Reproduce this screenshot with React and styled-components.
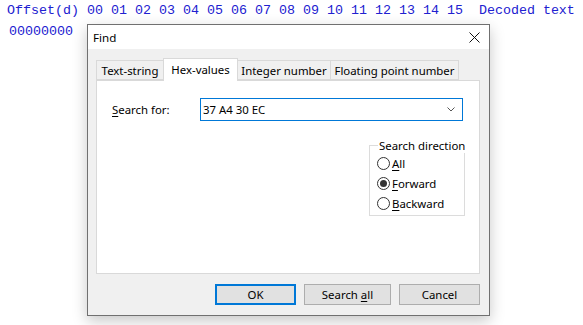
import React from 'react';
import styled, { createGlobalStyle } from 'styled-components';

const GlobalStyle = createGlobalStyle`
  html, body {
    margin: 0;
    background: #ffffff;
  }
  body {
    width: 583px;
    height: 325px;
    overflow: hidden;
    position: relative;
  }
`;

const HexView = styled.div`
  padding: 0 0 0 7px;
  font-family: "Liberation Mono", "Courier New", monospace;
  font-size: 13.33px;
  color: #2020d0;
`;

const HexLine = styled.div`
  height: 21px;
  line-height: 21px;
  white-space: pre;
  padding-left: ${p => p.indent || 0}px;
`;

const Window = styled.div`
  position: absolute;
  left: 87px;
  top: 24px;
  width: 401px;
  height: 290px;
  border: 1px solid #707070;
  background: #f0f0f0;
  box-shadow: 0 5px 14px rgba(0, 0, 0, 0.22);
  display: flex;
  flex-direction: column;
  font-family: "Noto Sans", "Open Sans", sans-serif;
  font-size: 11.4px;
  color: #000;
`;

const TitleBar = styled.div`
  height: 24px;
  background: #ffffff;
  display: flex;
  align-items: center;
  justify-content: space-between;
  padding: 0 9px 0 5px;
`;

const Title = styled.span`
  font-size: 11.6px;
`;

const Body = styled.div`
  flex: 1;
  display: flex;
  flex-direction: column;
  padding: 9px 9px 10px 8px;
`;

const TabStrip = styled.div`
  display: flex;
  align-items: flex-end;
  height: 22px;
  position: relative;
  z-index: 1;
`;

const Tab = styled.div`
  box-sizing: border-box;
  width: ${p => p.w}px;
  height: ${p => (p.active ? 23 : 20)}px;
  margin-bottom: ${p => (p.active ? -1 : 0)}px;
  border: 1px solid #d9d9d9;
  border-bottom: ${p => (p.active ? 'none' : '1px solid #d9d9d9')};
  margin-left: ${p => (p.first ? 0 : -1)}px;
  background: ${p => (p.active ? '#ffffff' : '#f0f0f0')};
  display: flex;
  align-items: center;
  justify-content: center;
  padding-bottom: ${p => (p.active ? 2 : 0)}px;
  white-space: nowrap;
`;

const Panel = styled.div`
  box-sizing: border-box;
  height: 194px;
  background: #ffffff;
  border: 1px solid #d9d9d9;
  display: flex;
  flex-direction: column;
  padding: 17px 16px 0 15px;
`;

const SearchRow = styled.div`
  display: flex;
  align-items: center;
  height: 23px;
`;

const Label = styled.label`
  width: 88px;
`;

const Combo = styled.div`
  box-sizing: border-box;
  flex: 1;
  height: 23px;
  border: 1px solid #0078d7;
  display: flex;
  align-items: center;
  justify-content: space-between;
  padding: 0 7px 0 2px;
`;

const Group = styled.fieldset`
  margin: 17px -2px 0 auto;
  width: 96px;
  min-width: 0;
  box-sizing: border-box;
  height: 78px;
  border: 1px solid #dcdcdc;
  padding: 0 0 0 7px;
  display: flex;
  flex-direction: column;
`;

const Legend = styled.legend`
  padding: 0 1px;
  margin-left: 1px;
  line-height: 15px;
  white-space: nowrap;
`;

const RadioRow = styled.div`
  display: flex;
  align-items: center;
  height: 20px;
  gap: 2px;
`;

const RadioCircle = styled.span`
  box-sizing: border-box;
  width: 13px;
  height: 13px;
  border-radius: 50%;
  border: 1px solid #333333;
  background: #ffffff;
  display: flex;
  align-items: center;
  justify-content: center;
  &::after {
    content: '';
    width: 7px;
    height: 7px;
    border-radius: 50%;
    background: #333333;
    display: ${p => (p.checked ? 'block' : 'none')};
  }
`;

const Footer = styled.div`
  display: flex;
  justify-content: flex-end;
  gap: 8px;
  margin-top: 10px;
  padding-right: 0;
`;

const Button = styled.div`
  box-sizing: border-box;
  width: ${p => p.w || 81}px;
  height: 21px;
  background: #e1e1e1;
  border: ${p => (p.primary ? '2px solid #0078d7' : '1px solid #adadad')};
  display: flex;
  align-items: center;
  justify-content: center;
`;

const U = styled.span`
  text-decoration: underline;
  text-underline-offset: 2px;
`;

const hexHeader =
  'Offset(d) 00 01 02 03 04 05 06 07 08 09 10 11 12 13 14 15  Decoded text';

export default function App() {
  return (
    <>
      <GlobalStyle />
      <HexView>
        <HexLine>{hexHeader}</HexLine>
        <HexLine indent={2}>00000000</HexLine>
      </HexView>
      <Window>
        <TitleBar>
          <Title>Find</Title>
          <svg width="11" height="11" viewBox="0 0 11 11">
            <path d="M0.5 0.5 L10.5 10.5 M10.5 0.5 L0.5 10.5" stroke="#111" strokeWidth="1" />
          </svg>
        </TitleBar>
        <Body>
          <TabStrip>
            <Tab first w={68}>Text-string</Tab>
            <Tab active w={75}>Hex-values</Tab>
            <Tab w={94}>Integer number</Tab>
            <Tab w={129}>Floating point number</Tab>
          </TabStrip>
          <Panel>
            <SearchRow>
              <Label><U>S</U>earch for:</Label>
              <Combo>
                <span>37 A4 30 EC</span>
                <svg width="8" height="5" viewBox="0 0 8 5">
                  <path d="M0.5 0.5 L4 4 L7.5 0.5" stroke="#555" fill="none" strokeWidth="1" />
                </svg>
              </Combo>
            </SearchRow>
            <Group>
              <Legend>Search direction</Legend>
              <RadioRow><RadioCircle /><span><U>A</U>ll</span></RadioRow>
              <RadioRow><RadioCircle checked /><span><U>F</U>orward</span></RadioRow>
              <RadioRow><RadioCircle /><span><U>B</U>ackward</span></RadioRow>
            </Group>
          </Panel>
          <Footer>
            <Button primary>OK</Button>
            <Button w={87}><span>Search <U>a</U>ll</span></Button>
            <Button>Cancel</Button>
          </Footer>
        </Body>
      </Window>
    </>
  );
}
